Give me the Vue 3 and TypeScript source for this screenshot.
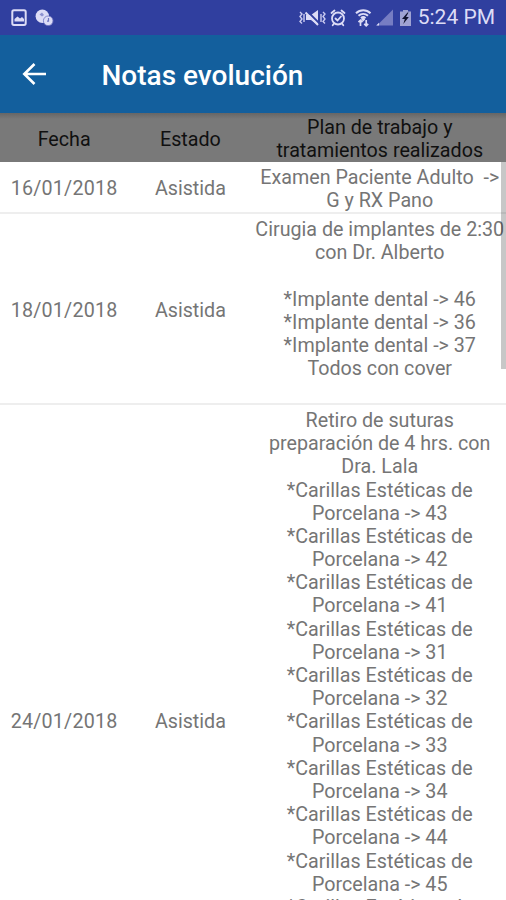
<script setup lang="ts">
interface Note {
  date: string
  status: string
  lines: string[]
}

const teeth: number[] = [43, 42, 41, 31, 32, 33, 34, 44, 45, 35, 36, 46]

const notes: Note[] = [
  {
    date: '16/01/2018',
    status: 'Asistida',
    lines: ['Examen Paciente Adulto  ->', 'G y RX Pano'],
  },
  {
    date: '18/01/2018',
    status: 'Asistida',
    lines: [
      'Cirugia de implantes de 2:30',
      'con Dr. Alberto',
      '',
      '*Implante dental -> 46',
      '*Implante dental -> 36',
      '*Implante dental -> 37',
      'Todos con cover',
      '',
    ],
  },
  {
    date: '24/01/2018',
    status: 'Asistida',
    lines: [
      'Retiro de suturas',
      'preparación de 4 hrs. con',
      'Dra. Lala',
      ...teeth.flatMap((n) => ['*Carillas Estéticas de', `Porcelana -> ${n}`]),
    ],
  },
]
</script>

<template>
  <div class="screen">
    <div class="status">
      <svg class="notif" width="46" height="20" viewBox="0 0 46 20">
        <rect x="1.300" y="2.300" width="13.400" height="14.600" rx="1.600" fill="none" stroke="#dcdcf6" stroke-width="2" />
        <path d="M3.500 13.500V11l3-2.500 2.500 2 2-1.500 2 2v2.500z" fill="#dcdcf6" />
        <circle cx="31.300" cy="8.300" r="6.700" fill="#dcdcf6" />
        <path d="M28.500 6.500l2.500-2 2 2.500-2 1.500z" fill="#8d92d0" />
        <circle cx="37.200" cy="12.800" r="4.800" fill="#dcdcf6" stroke="#6d74c0" stroke-width=".8" />
        <path d="M37.500 10v3.200h-1.500" fill="none" stroke="#6d74c0" stroke-width="1.200" />
      </svg>
      <div class="system">
        <svg width="114" height="22" viewBox="0 0 114 22">
          <g fill="none" stroke="#c9caf0" stroke-width="1.400">
            <path d="M1 5l2 2-2 2.500 2 2.500-2 2.500 2 2" />
            <path d="M5 7v8M22 7v8" />
            <path d="M24 5l2 2-2 2.500 2 2.500-2 2.500 2 2" />
          </g>
          <path d="M7 8h5l7-5v15l-7-5H7z" fill="#dcdcf6" />
          <path d="M8.500 4.500l12 12" stroke="#303f9f" stroke-width="1.800" />
          <path d="M6.500 5.500l12.500 12.500" stroke="#dcdcf6" stroke-width="2" />
          <g fill="none" stroke="#dcdcf6" stroke-width="1.800" stroke-linecap="round">
            <circle cx="39" cy="11.500" r="6" />
            <path d="M32.500 6l3-2.500M45.500 6l-3-2.500M35 16.500l-1.300 1.700M43 16.500l1.300 1.700" />
            <path d="M36.500 11.500l2 2 3.500-4" />
          </g>
          <g fill="none" stroke="#dcdcf6" stroke-width="2">
            <path d="M57 6.200c4.200-4 10.300-4 14.500 0" />
            <path d="M59.500 8.800c2.800-2.500 6.700-2.500 9.500 0" />
            <path d="M62 11.200c1.300-1.200 3.200-1.200 4.500 0" />
          </g>
          <path d="M64.200 10l2 2.500-2 2-2-2z" fill="#dcdcf6" />
          <path d="M61.500 13v6M59.500 15.200l2-2 2 2M67.200 13v6M65.200 16.800l2 2 2-2" fill="none" stroke="#dcdcf6" stroke-width="1.700" />
          <path d="M78 18.500L94 2.500v16z" fill="#767dc3" />
          <path d="M77.200 18.500l2.800-2.800v2.800z" fill="#dcdcf6" />
          <path d="M101 4.500h3V3h5v1.500h3v14.500h-11z" fill="#9fa3d3" />
          <path d="M108.500 5.500l-5.500 6.500h2.800l-1.500 5 5.500-7H107l2.500-4.500z" fill="#10132e" />
        </svg>
        <span class="clock">5:24 PM</span>
      </div>
    </div>

    <header class="bar">
      <svg class="back" width="26" height="24" viewBox="0 0 26 24">
        <path d="M24 12H3M12.500 2L2.300 12l10.200 10" fill="none" stroke="#fff" stroke-width="2.600" />
      </svg>
      <h1>Notas evolución</h1>
    </header>

    <main class="list">
      <div class="row head">
        <div>Fecha</div>
        <div>Estado</div>
        <div class="plan">Plan de trabajo y<br />tratamientos realizados</div>
      </div>
      <div v-for="note in notes" :key="note.date" class="row">
        <div class="date">{{ note.date }}</div>
        <div>{{ note.status }}</div>
        <div class="plan">
          <div v-for="(line, i) in note.lines" :key="i" class="line">{{ line }}</div>
        </div>
      </div>
      <div class="thumb"></div>
    </main>
  </div>
</template>

<style>
body {
  overflow: hidden;
}
</style>

<style scoped>
.screen {
  width: 506px;
  height: 900px;
  overflow: hidden;
  background: #fff;
  font-family: Roboto, sans-serif;
  display: flex;
  flex-direction: column;
}
.status {
  height: 35px;
  flex: none;
  box-sizing: border-box;
  padding: 0 11px 0 11px;
  background: #303f9f;
  display: flex;
  align-items: center;
  justify-content: space-between;
}
.notif {
  display: block;
}
.system {
  display: flex;
  align-items: center;
  gap: 5px;
}
.clock {
  color: #dcdcf6;
  font-size: 21px;
  line-height: 35px;
  white-space: nowrap;
}
.bar {
  height: 78px;
  flex: none;
  box-sizing: border-box;
  padding: 2px 0 0 22px;
  background: #135f9d;
  display: flex;
  align-items: center;
}
.back {
  margin-top: -3px;
}
h1 {
  margin: 0 0 0 53.500px;
  color: #fff;
  font-size: 28px;
  font-weight: 500;
}
.list {
  position: relative;
  flex: none;
}
.row {
  display: grid;
  grid-template-columns: 1fr 1fr 2fr;
  align-items: center;
  box-sizing: border-box;
  padding: 3.500px 0 0 1px;
  border-bottom: 2px solid #eee;
  color: #757575;
  font-size: 19.700px;
  line-height: 23.200px;
  text-align: center;
  white-space: nowrap;
}
.row:nth-child(2) {
  padding-bottom: 0.600px;
}
.date {
  letter-spacing: 0.200px;
}
.head {
  height: 49px;
  padding: 3px 0 0 1px;
  border: 0;
  background: linear-gradient(#666, #797979 6px);
  color: #101010;
}
.line {
  height: 23.200px;
  white-space: pre;
}
.thumb {
  position: absolute;
  top: 49px;
  right: 0;
  width: 5px;
  height: 207px;
  background: rgba(0, 0, 0, 0.22);
}
</style>
